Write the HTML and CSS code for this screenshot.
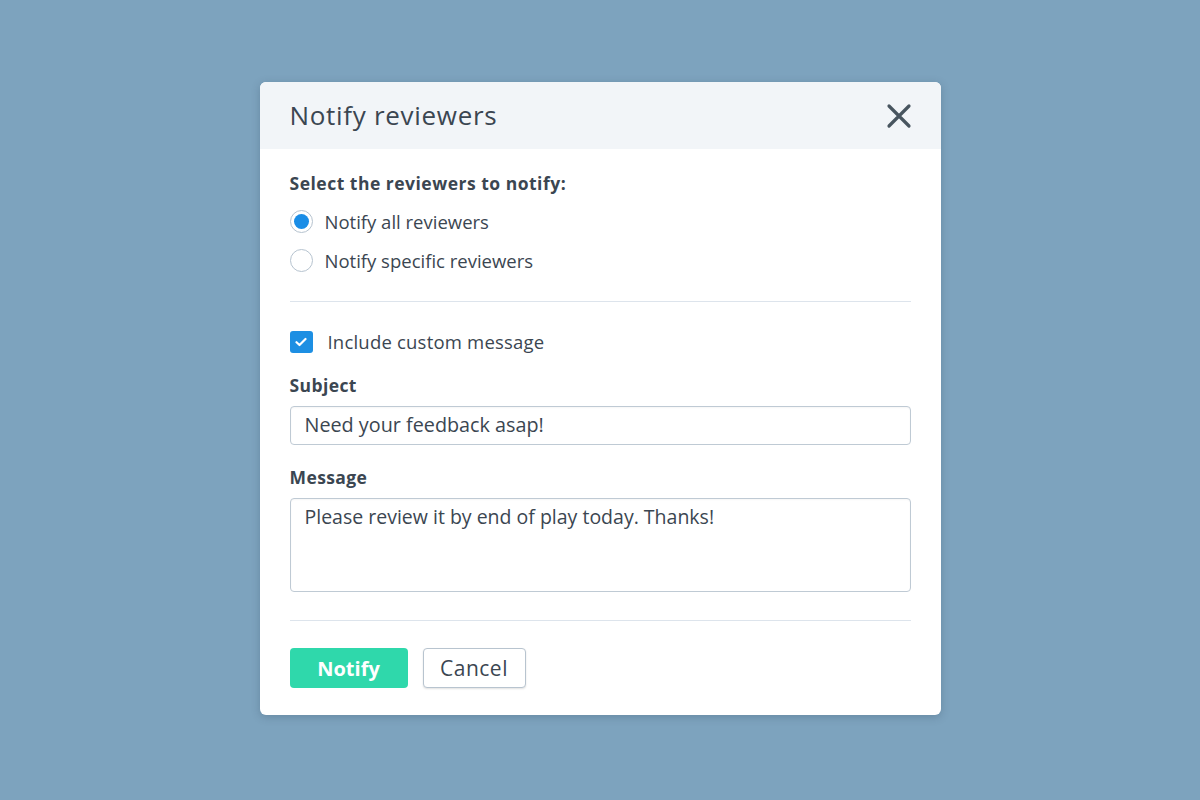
FILE: index.html
```html
<!DOCTYPE html>
<html lang="en">
<head>
  <meta charset="UTF-8">
  <title>Notify reviewers</title>
  <link rel="stylesheet" href="styles.css">
</head>
<body>
  <div class="dialog">
    <div class="dialog-head">
      <h1 class="dialog-title">Notify reviewers</h1>
      <svg class="close" width="26" height="26" viewBox="0 0 26 26">
        <path d="M3 3 L23 23 M23 3 L3 23" stroke="#48555f" stroke-width="3.2" stroke-linecap="round"/>
      </svg>
    </div>
    <div class="dialog-body">
      <div class="section-title">Select the reviewers to notify:</div>
      <div class="radio-list">
        <label class="radio-row"><span class="radio checked"></span>Notify all reviewers</label>
        <label class="radio-row"><span class="radio"></span>Notify specific reviewers</label>
      </div>
      <hr class="divider">
      <label class="check-row">
        <span class="checkbox">
          <svg width="12" height="10" viewBox="0 0 12 10"><path d="M1.5 5.2 L4.5 8 L10.5 2" fill="none" stroke="#fff" stroke-width="2.2" stroke-linecap="round" stroke-linejoin="round"/></svg>
        </span>
        Include custom message
      </label>
      <div class="field">
        <div class="field-label">Subject</div>
        <div class="input">Need your feedback asap!</div>
      </div>
      <div class="field">
        <div class="field-label">Message</div>
        <div class="input textarea">Please review it by end of play today. Thanks!</div>
      </div>
      <hr class="divider bottom">
      <div class="actions">
        <button class="btn primary">Notify</button>
        <button class="btn secondary">Cancel</button>
      </div>
    </div>
  </div>
</body>
</html>
```

FILE: styles.css
```css
html, body {
  margin: 0;
  height: 100%;
}

body {
  background: #7da3be;
  font-family: "Open Sans", "Noto Sans", sans-serif;
  color: #3b4651;
  display: flex;
  justify-content: center;
  align-items: flex-start;
}

.dialog {
  margin-top: 82px;
  width: 681px;
  background: #fff;
  border-radius: 6px;
  overflow: hidden;
  box-shadow: 0 2px 8px rgba(40, 60, 80, 0.25);
}

.dialog-head {
  height: 67px;
  background: #f2f5f8;
  display: flex;
  align-items: center;
  justify-content: space-between;
  padding: 0 29px 0 30px;
}

.dialog-title {
  margin: 0 0 2px;
  font-size: 26px;
  font-weight: 400;
  letter-spacing: 0.7px;
  color: #3b4651;
}

.close {
  display: block;
}

.dialog-body {
  padding: 22px 30px 27px;
}

.section-title {
  font-size: 17.5px;
  font-weight: 700;
  letter-spacing: 0.5px;
  line-height: 24px;
}

.radio-list {
  margin-top: 15px;
  display: flex;
  flex-direction: column;
  gap: 16px;
}

.radio-row, .check-row {
  display: flex;
  align-items: center;
  font-size: 18.5px;
  line-height: 23px;
}

.check-row {
  letter-spacing: 0.2px;
}

.radio {
  box-sizing: border-box;
  width: 23px;
  height: 23px;
  border: 1.5px solid #b6c3cf;
  border-radius: 50%;
  margin-right: 12px;
  background: #fff;
  display: flex;
  align-items: center;
  justify-content: center;
}

.radio.checked::after {
  content: "";
  width: 15px;
  height: 15px;
  border-radius: 50%;
  background: #1a8de6;
}

.divider {
  border: 0;
  border-top: 1.5px solid #dde4ec;
  margin: 29px 0 28px;
}

.check-row .checkbox {
  width: 23px;
  height: 22px;
  border-radius: 3px;
  background: #1d8fe3;
  margin-right: 15px;
  display: flex;
  align-items: center;
  justify-content: center;
}

.field {
  margin-top: 20px;
}

.field-label {
  font-size: 17.5px;
  font-weight: 700;
  letter-spacing: 0.4px;
  line-height: 24px;
  margin-bottom: 9px;
}

.input {
  height: 39px;
  box-sizing: border-box;
  border: 1.5px solid #bfcad4;
  border-radius: 4px;
  padding: 0 14px;
  font-size: 19.8px;
  line-height: 35px;
  box-shadow: inset 0 1px 2px rgba(0, 0, 0, 0.04);
}

.input.textarea {
  height: 94px;
  font-size: 19.5px;
  line-height: 35px;
}

.divider.bottom {
  margin: 28px 0 27px;
}

.actions {
  display: flex;
  gap: 15px;
}

.btn {
  height: 40px;
  border-radius: 4px;
  font-family: inherit;
  padding: 0;
  cursor: pointer;
}

.btn.primary {
  width: 118px;
  background: #2fd8ab;
  border: 0;
  color: #fff;
  font-size: 20px;
  font-weight: 700;
}

.btn.secondary {
  width: 103px;
  background: #fff;
  border: 1.5px solid #b8c4cf;
  color: #3b4651;
  font-size: 21px;
  letter-spacing: 0.5px;
  box-shadow: 0 1px 2px rgba(0, 0, 0, 0.12);
}
```
